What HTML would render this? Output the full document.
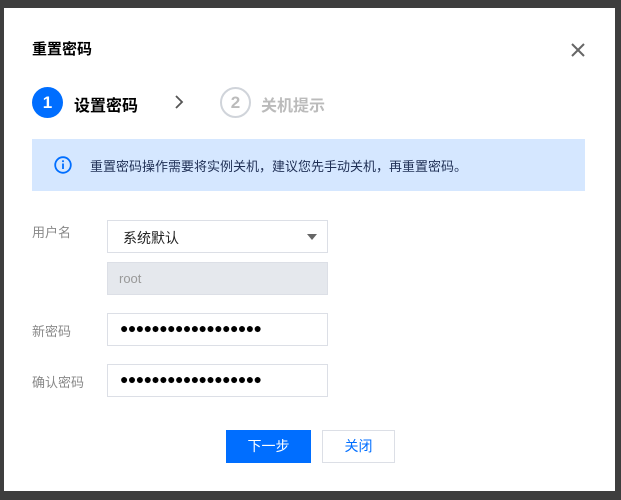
<!DOCTYPE html><html><head><meta charset="utf-8"><style>
*{margin:0;padding:0;box-sizing:border-box}
body{width:621px;height:500px;background:#3e3e3e;position:relative;overflow:hidden;font-family:"Liberation Sans","Noto Sans CJK SC",sans-serif}
.m{position:absolute;left:4px;top:8px;width:611px;height:483px;background:#fff}
.a{position:absolute}
.inp{position:absolute;left:107px;width:221px;height:33px;border:1px solid #dcdfe6;background:#fff}
.lbl{position:absolute;left:32px;font-size:13px;color:#888}
.dots{position:absolute;left:12px;top:6px;font-size:14px;letter-spacing:-0.6px;color:#000}
</style></head><body>
<div class="m"></div>
<div class="a" style="left:32px;top:38px;font-size:15px;font-weight:bold;color:#000">重置密码</div>
<svg class="a" style="left:571px;top:43px" width="14" height="14"><path d="M1 1L13 13M13 1L1 13" stroke="#666" stroke-width="2"/></svg>
<div class="a" style="left:32px;top:87px;width:31px;height:31px;border-radius:50%;background:#006eff;color:#fff;font-size:17px;font-weight:bold;text-align:center;line-height:31px">1</div>
<div class="a" style="left:74px;top:92px;font-size:16px;font-weight:bold;color:#000">设置密码</div>
<svg class="a" style="left:174px;top:95px" width="10" height="14"><path d="M2 1L8 7L2 13" stroke="#555" stroke-width="1.8" fill="none"/></svg>
<div class="a" style="left:220px;top:87px;width:31px;height:31px;border-radius:50%;border:2px solid #d0d4da;color:#bbb;font-size:17px;font-weight:bold;text-align:center;line-height:27px">2</div>
<div class="a" style="left:261px;top:92px;font-size:16px;font-weight:bold;color:#bbb">关机提示</div>
<div class="a" style="left:32px;top:139px;width:553px;height:52px;background:#d5e7ff"></div>
<svg class="a" style="left:54px;top:156px" width="18" height="18"><circle cx="9" cy="9" r="7.8" stroke="#006eff" stroke-width="1.8" fill="none"/><rect x="8.1" y="7.5" width="1.8" height="5.5" fill="#006eff"/><rect x="8.1" y="4.3" width="1.8" height="1.8" fill="#006eff"/></svg>
<div class="a" style="left:90px;top:156px;font-size:13px;color:#1f2f55">重置密码操作需要将实例关机，建议您先手动关机，再重置密码。</div>
<div class="lbl" style="top:222px">用户名</div>
<div class="inp" style="top:220px"><span class="a" style="left:15px;top:7px;font-size:14px;color:#222">系统默认</span><svg class="a" style="left:199px;top:13px" width="10" height="6"><path d="M0 0H10L5 6Z" fill="#666"/></svg></div>
<div class="inp" style="top:262px;background:#e5e8ed"><span class="a" style="left:11px;top:8px;font-size:13px;color:#999">root</span></div>
<div class="lbl" style="top:321px">新密码</div>
<div class="inp" style="top:313px"><span class="dots">●●●●●●●●●●●●●●●●●●</span></div>
<div class="lbl" style="top:372px">确认密码</div>
<div class="inp" style="top:364px"><span class="dots">●●●●●●●●●●●●●●●●●●</span></div>
<div class="a" style="left:226px;top:430px;width:85px;height:33px;background:#006eff;color:#fff;font-size:14px;text-align:center;line-height:33px">下一步</div>
<div class="a" style="left:322px;top:430px;width:73px;height:33px;border:1px solid #dcdfe6;color:#006eff;font-size:14px;text-align:center;line-height:31px">关闭</div>
</body></html>
